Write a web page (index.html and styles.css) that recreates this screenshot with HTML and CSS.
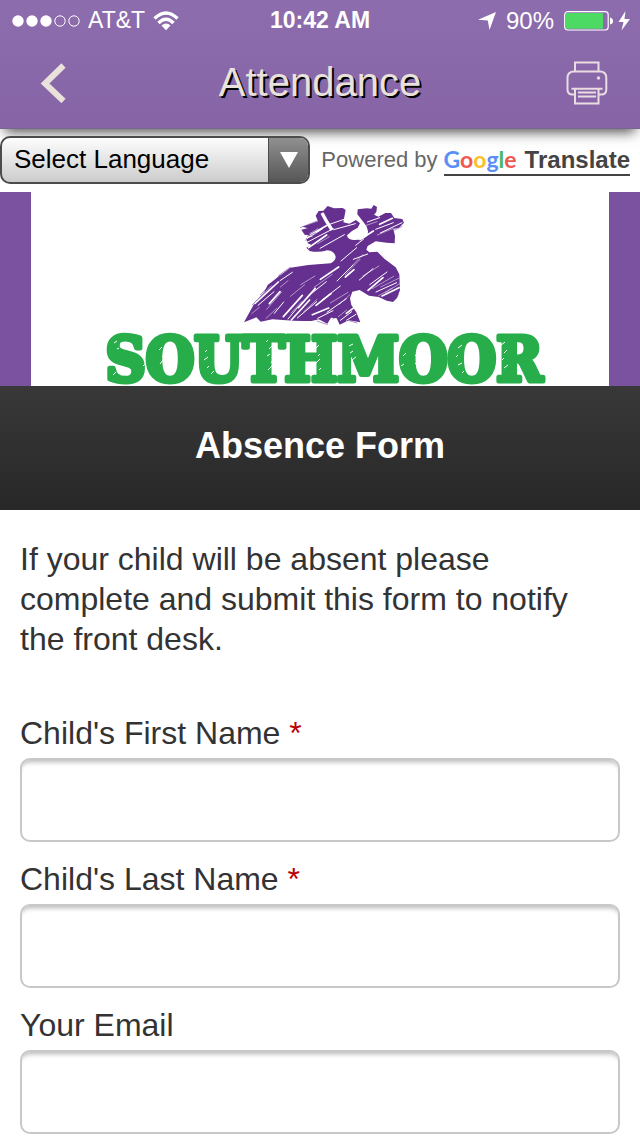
FILE: index.html
```
<!DOCTYPE html>
<html lang="en">
<head>
  <meta charset="UTF-8">
  <meta name="viewport" content="width=device-width, initial-scale=1.0">
  <title>Attendance</title>
  <link rel="stylesheet" href="styles.css">
</head>
<body>
  <header class="header">
    <!-- Status Bar -->
    <div class="status-bar">
      <div class="status-left">
        <svg class="signal" width="70" height="12" viewBox="-2 0 70 12">
          <g fill="#fff">
            <circle cx="6" cy="6" r="5.7"/>
            <circle cx="20" cy="6" r="5.7"/>
            <circle cx="34" cy="6" r="5.7"/>
          </g>
          <g fill="none" stroke="#fff">
            <circle cx="48" cy="6" r="5.2"/>
            <circle cx="62" cy="6" r="5.2"/>
          </g>
        </svg>
        <span>AT&amp;T</span>
        <svg width="26" height="20" viewBox="0 0 26 20">
          <g fill="none" stroke="#fff" stroke-width="3.400">
            <path d="M1.5 7.5Q13-3.5 24.5 7.5"/>
            <path d="M5.5 12Q13 4.500 20.500 12"/>
          </g>
          <path d="M8.500 14.500Q13 10.500 17.500 14.500L13 19.300Z" fill="#fff"/>
        </svg>
      </div>
      <div class="status-time">10:42 AM</div>
      <div class="status-right">
        <svg width="18" height="18" viewBox="0 0 18 18"><path d="M18 0L11.500 18L9.800 8.400L0 7.800Z" fill="#fff"/></svg>
        <span>90%</span>
        <svg width="66" height="20" viewBox="0 0 66 20">
          <rect x="0.700" y="0.700" width="43.500" height="18.300" rx="3" fill="none" stroke="#fff" stroke-width="1.200"/>
          <rect x="2" y="2" width="37" height="15.700" rx="1" fill="#4cd964"/>
          <path d="M46 6.500Q49 7 49 10T46 13.500Z" fill="#fff"/>
          <path d="M61.500 0L54.500 11H59.500L57.500 19.500L66 8H60.500Z" fill="#fff"/>
        </svg>
      </div>
    </div>

    <!-- Title Bar -->
    <div class="title-bar">
      <button class="icon-button" type="button" aria-label="Back">
        <svg width="26" height="40" viewBox="0 0 26 40"><path d="M23.500 2.500L5 20.500L23.500 38" fill="none" stroke="#e9e1dc" stroke-width="6"/></svg>
      </button>
      <h1 class="title">Attendance</h1>
      <button class="icon-button" type="button" aria-label="Print">
        <svg width="42" height="44" viewBox="0 0 42 44">
          <g fill="none" stroke="#e9dde2" stroke-width="2">
            <path d="M9 10.500V1.500H32.500V10.500"/>
            <path d="M9 33.500H6.500Q1.500 33.500 1.500 28.500V17Q1.500 10.500 8 10.500H34Q40.300 10.500 40.300 17V28.500Q40.300 33.500 35.300 33.500H32.500"/>
            <path d="M5.500 27.700H36.500M9 27.700V42.500H32.500V27.700M12 31.500H30M12 35.500H30"/>
          </g>
          <circle cx="32.500" cy="17" r="1.700" fill="#e9dde2"/>
        </svg>
      </button>
    </div>
  </header>

  <!-- Language Picker -->
  <div class="translate">
    <div class="language">
      <select class="language-select" aria-label="Language">
        <option>Select Language</option>
      </select>
      <span class="language-arrow">
        <svg width="18" height="16" viewBox="0 0 18 16"><path d="M0 0H18L9 16Z" fill="#fff"/></svg>
      </span>
    </div>
    <div class="powered">
      <span>Powered by</span>
      <a class="google-link" href="#"><span class="google"><span class="blue">G</span><span class="red">o</span><span class="yellow">o</span><span class="blue">g</span><span class="green">l</span><span class="red">e</span></span><span>Translate</span></a>
    </div>
  </div>

  <!-- School Logo -->
  <div class="banner">
    <svg class="banner-logo" viewBox="0 0 578 194" role="img" aria-label="Southmoor">
      <svg x="199" y="3" width="190" height="135" viewBox="0 0 570 405">
        <path fill="#65308f" d="M42 382L75 322L103 290L113 270L151 241L181 218L235 210L302 205Q316 198 317 186Q314 168 292 166Q264 174 239 168L229 158L246 151L233 145L229 130L250 123L224 119L214 104L234 100L217 95L264 79L257 62L266 48L280 47L293 33L312 40L338 39L347 45L344 61L340 82L358 86L378 75L390 85L383 98L366 108L351 121Q353 134 370 135Q398 136 411 123Q420 104 403 85L382 58L383 43L410 40L424 41L431 30L441 36L439 51L432 59L445 65L466 54L483 54L493 69L517 72L522 83L507 98L490 102L495 123L494 145L470 143L437 139L413 153L409 164L418 172L442 170L463 191L497 217L508 238L510 285L501 309L489 321L470 317L446 306L417 302L389 285L367 290L360 310L364 330L379 352L391 382L356 376L329 389L320 370L303 368L292 386L266 373L245 378L217 378L190 377L127 373L92 380L79 367Z"/>
        <!-- gap between the antler points -->
        <path d="M276 54Q288 78 306 105" fill="none" stroke="#fff" stroke-width="10"/>
        <!-- scratches -->
        <g fill="none" stroke="#fff" stroke-linecap="round">
          <path stroke-width="5" d="M75 325L145 261M118 326L150 290M160 365L217 301M184 375L239 315M205 338L256 280M258 331L303 296M346 246L372 224M271 253L326 216M390 134L430 108M242 119L289 92M236 158L290 120M449 88L487 70M414 286L459 248M456 303L507 278M349 355L372 338M247 359L296 339"/>
          <path stroke-width="3" d="M84 331L132 290M150 257L187 232M133 355L161 321M174 372L203 337M202 369L260 320M236 302L289 260M276 315L331 273M291 352L349 311M321 258L369 210M333 198L380 158M370 193L413 177M388 255L429 221M419 269L471 231M438 291L500 263M232 130L277 102M229 143L310 101M270 160L343 119M290 91L342 73M311 104L376 86M412 81L449 68M437 103L490 83M451 114L516 83M377 151L401 132M331 376L365 350M349 376L378 358M263 370L309 347"/>
          <path stroke-width="1.500" d="M84 313L125 272M110 343L155 291M151 276L174 257M181 304L224 269M183 354L216 319M221 350L261 313M252 277L307 238M301 324L354 292M328 328L359 300M360 219L399 178M398 243L447 213M452 276L506 250M446 302L487 279M239 116L264 101M263 146L298 125M406 92L441 80M442 120L490 100M325 365L350 345M466 293L509 266M427 281L491 244M65 356L88 337M108 370L140 340M346 239L390 193M212 269L255 243"/>
        </g>
        <path fill="none" stroke="#65308f" stroke-width="1.500" d="M210 98L264 77M220 105L268 84M231 125L257 113M225 136L249 130M90 300L151 239M65 331L98 299M145 242L182 216M492 106L517 94M491 314L507 298M308 373L324 361M260 378L293 389M345 374L382 384"/>
      </svg>
      <text class="logo-text" x="293" y="189">SOUTHMOOR</text>
      <!-- worn spots on the letters -->
      <g fill="none" stroke="#fff" stroke-width="1">
        <path d="M83 151l3-2M86 157l2-1M82 183l3-3M112 174l2-2M128 158l3-3M131 165l2-2M129 172l3-4M174 160l2-2M173 168l4-3M176 176l2-2M180 182l3-3M235 150l2-2M238 157l4-4M236 164l3-2M240 171l2-3M237 178l4-4M284 157l4-4M287 164l2-2M285 171l4-4M288 178l2-2M318 154l4-2M319 161l3-2M321 168l4-3M372 164l3-3M370 174l3-2M386 156l4-3M384 164l2-2M384 172l4-3M389 180l2-2M427 156l4-3M425 165l2-2M427 173l4-2M431 181l2-2M470 153l4-3M473 161l3-3M471 168l2-2M473 176l4-3"/>
      </g>
    </svg>
  </div>

  <h2 class="form-title">Absence Form</h2>

  <!-- Absence Form -->
  <form class="form">
    <p class="intro">If your child will be absent please complete and submit this form to notify the front desk.</p>
    <div class="fields">
      <div class="field">
        <label for="first-name">Child's First Name <span class="required">*</span></label>
        <input type="text" id="first-name" required>
      </div>
      <div class="field">
        <label for="last-name">Child's Last Name <span class="required">*</span></label>
        <input type="text" id="last-name" required>
      </div>
      <div class="field">
        <label for="email">Your Email</label>
        <input type="email" id="email">
      </div>
    </div>
  </form>
</body>
</html>
```
FILE: styles.css
```
* { box-sizing: border-box; }
body { margin: 0; background: #fff; color: #333; font-family: "Liberation Sans", Arial, sans-serif; }
svg { display: block; }

/* Header */
.header {
  background: linear-gradient(#8d6dae, #8664a6);
  border-bottom: 1px solid #75688a;
  box-shadow: 0 8px 12px -5px rgba(0, 0, 0, 0.7);
  color: #fff;
}
.status-bar {
  display: grid; grid-template-columns: 1fr auto 1fr; align-items: center;
  height: 41px; padding: 0 10px; font-size: 24px;
}
.status-left, .status-right { display: flex; align-items: center; gap: 10px; }
.status-left { gap: 8px; font-size: 23px; }
.status-right { justify-content: flex-end; }
.status-time { font-size: 23px; font-weight: bold; }
.title-bar { display: flex; align-items: center; justify-content: space-between; height: 87px; padding: 0 32px 4px; }
.title { margin: 0; color: #e9e1dc; font-size: 40px; font-weight: normal; text-shadow: 2px 2px 0 #000; }
.icon-button { display: flex; justify-content: center; width: 42px; padding: 0; background: none; border: none; cursor: pointer; }

/* Language picker */
.translate { display: flex; align-items: center; justify-content: space-between; padding: 7px 10px 8px 0; }
.language { position: relative; width: 310px; }
.language-select {
  display: block; width: 100%; height: 48px; padding: 0 54px 2px 12px;
  appearance: none; border: 2px solid #4c4c4c; border-radius: 10px;
  background: linear-gradient(#fdfdfd, #cccccc); color: #000;
  font-family: inherit; font-size: 26px;
}
.language-arrow {
  position: absolute; top: 2px; right: 2px; bottom: 2px; width: 40px;
  display: flex; align-items: center; justify-content: center;
  background: linear-gradient(#909090, #565656); border-left: 1px solid #4c4c4c;
  border-radius: 0 8px 8px 0; pointer-events: none;
}
.powered { display: flex; align-items: center; gap: 6px; color: #666; font-size: 22px; }
.google-link {
  display: flex; align-items: baseline; gap: 8px; border-bottom: 2px solid #444;
  color: #444; font-size: 24px; font-weight: bold; line-height: 28px; text-decoration: none;
}
.google { font-family: Lato, sans-serif; font-size: 23px; }
.blue { color: #5b8ff5; }
.red { color: #ee5a52; }
.yellow { color: #fbc02a; }
.green { color: #4cb566; }

/* Logo */
.banner { padding: 0 31px; background: #7b529f; }
.banner-logo { width: 100%; background: #fff; overflow: visible; }
.logo-text {
  fill: #28ad4b; stroke: #28ad4b; stroke-width: 5; stroke-linejoin: round; text-anchor: middle;
  font-family: "DejaVu Serif Condensed", "DejaVu Serif", serif; font-size: 62px; font-weight: bold;
}

.form-title {
  margin: 0; padding: 40px 20px 44px; background: linear-gradient(#383838, #282828);
  color: #fff; font-size: 36px; line-height: 40px; text-align: center;
}

/* Form */
.form { padding: 29px 20px 0; font-size: 32px; line-height: 40px; }
.intro { margin: 0 0 54px; }
.fields { display: flex; flex-direction: column; gap: 17px; }
.field { display: flex; flex-direction: column; gap: 5px; }
.required { color: #b00; }
.field input {
  width: 100%; height: 84px; padding: 0 16px; border: 2px solid #c8c8c8; border-radius: 10px;
  box-shadow: inset 0 6px 5px -4px #b8b8b8; background: #fff; font: inherit; color: inherit;
}
```
